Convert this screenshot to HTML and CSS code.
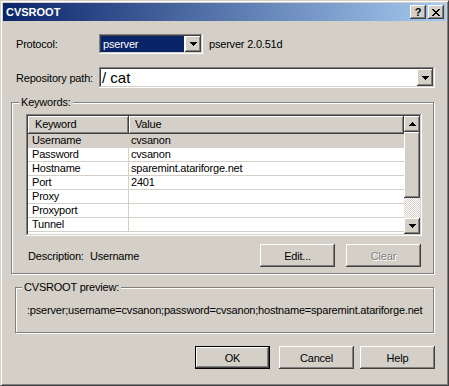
FILE: index.html
```html
<!DOCTYPE html>
<html lang="en">
<head>
    <meta charset="UTF-8">
    <title>CVSROOT</title>
    <link rel="stylesheet" href="styles.css">
</head>
<body>
    <div class="window">
        <!-- Barre de titre -->
        <div class="titlebar">
            <span class="title">CVSROOT</span>
            <button class="tbtn">?</button>
            <button class="tbtn">
                <svg width="8" height="7" viewBox="0 0 8 7"><path d="M0 0h2v1H0zM6 0h2v1H6zM1 1h2v1H1zM5 1h2v1H5zM2 2h4v1H2zM3 3h2v1H3zM2 4h4v1H2zM1 5h2v1H1zM5 5h2v1H5zM0 6h2v1H0zM6 6h2v1H6z"/></svg>
            </button>
        </div>

        <div class="content">
            <div class="field-row protocol-row">
                <label class="field-label">Protocol:</label>
                <div class="combo combo-small">
                    <span class="combo-text selected">pserver</span>
                    <span class="drop-btn"><svg width="7" height="4" viewBox="0 0 7 4"><path d="M0 0h7v1H0zM1 1h5v1H1zM2 2h3v1H2zM3 3h1v1H3z"/></svg></span>
                </div>
                <span class="version">pserver 2.0.51d</span>
            </div>

            <div class="field-row repo-row">
                <label class="field-label">Repository path:</label>
                <div class="combo combo-wide">
                    <span class="combo-text big">/ cat</span>
                    <span class="drop-btn"><svg width="7" height="4" viewBox="0 0 7 4"><path d="M0 0h7v1H0zM1 1h5v1H1zM2 2h3v1H2zM3 3h1v1H3z"/></svg></span>
                </div>
            </div>

            <!-- Mots-clés -->
            <div class="group keywords">
                <span class="group-label">Keywords:</span>
                <div class="listview">
                    <div class="lv-main">
                        <div class="lv-header">
                            <div class="hcell hcell-key">Keyword</div>
                            <div class="hcell hcell-val">Value</div>
                        </div>
                        <div class="lv-row selected"><div class="lv-key">Username</div><div class="lv-val">cvsanon</div></div>
                        <div class="lv-row"><div class="lv-key">Password</div><div class="lv-val">cvsanon</div></div>
                        <div class="lv-row"><div class="lv-key">Hostname</div><div class="lv-val">sparemint.atariforge.net</div></div>
                        <div class="lv-row"><div class="lv-key">Port</div><div class="lv-val">2401</div></div>
                        <div class="lv-row"><div class="lv-key">Proxy</div><div class="lv-val"></div></div>
                        <div class="lv-row"><div class="lv-key">Proxyport</div><div class="lv-val"></div></div>
                        <div class="lv-row"><div class="lv-key">Tunnel</div><div class="lv-val"></div></div>
                    </div>
                    <div class="scrollbar">
                        <div class="sb-btn"><svg width="7" height="4" viewBox="0 0 7 4"><path d="M3 0h1v1H3zM2 1h3v1H2zM1 2h5v1H1zM0 3h7v1H0z"/></svg></div>
                        <div class="sb-thumb"></div>
                        <div class="sb-track"></div>
                        <div class="sb-btn"><svg width="7" height="4" viewBox="0 0 7 4"><path d="M0 0h7v1H0zM1 1h5v1H1zM2 2h3v1H2zM3 3h1v1H3z"/></svg></div>
                    </div>
                </div>
                <div class="desc-row">
                    <span class="desc-label">Description:</span>
                    <span class="desc-value">Username</span>
                    <button class="btn">Edit...</button>
                    <button class="btn" disabled>Clear</button>
                </div>
            </div>

            <!-- Aperçu -->
            <div class="group preview">
                <span class="group-label">CVSROOT preview:</span>
                <div class="preview-text">:pserver;username=cvsanon;password=cvsanon;hostname=sparemint.atariforge.net</div>
            </div>

            <div class="dialog-buttons">
                <button class="btn default">OK</button>
                <button class="btn">Cancel</button>
                <button class="btn">Help</button>
            </div>
        </div>
    </div>
</body>
</html>
```

FILE: styles.css
```css
body {
    margin: 0;
    background: #d4d0c8;
    font-family: "Liberation Sans", Arial, sans-serif;
    font-size: 11px;
    letter-spacing: -0.2px;
    color: #000;
}
button {
    font: inherit;
    letter-spacing: inherit;
    color: #000;
    border: 0;
    padding: 0;
    margin: 0;
    background: #d4d0c8;
}
.window {
    box-sizing: border-box;
    width: 449px;
    height: 386px;
    background: #d4d0c8;
    border: 1px solid;
    border-color: #d4d0c8 #404040 #404040 #d4d0c8;
    box-shadow: inset 1px 1px #fff, inset -1px -1px #808080;
    padding: 2px;
}

/* Barre de titre */
.titlebar {
    height: 18px;
    display: flex;
    align-items: center;
    padding: 0 2px 0 3px;
    background: linear-gradient(to right, #0a246a, #a6caf0);
}
.title {
    flex: 1;
    color: #fff;
    font-weight: bold;
    letter-spacing: 0;
}
.tbtn {
    width: 16px;
    height: 14px;
    margin-left: 2px;
    font-weight: bold;
    line-height: 14px;
    display: flex;
    align-items: center;
    justify-content: center;
    box-shadow: inset -1px -1px #404040, inset 1px 1px #fff, inset -2px -2px #808080;
}

/* Bordures 3D */
.btn, .drop-btn, .sb-btn, .sb-thumb, .hcell {
    box-shadow: inset -1px -1px #404040, inset 1px 1px #fff, inset -2px -2px #808080, inset 2px 2px #d4d0c8;
}
.combo, .listview {
    box-shadow: inset -1px -1px #fff, inset 1px 1px #808080, inset -2px -2px #d4d0c8, inset 2px 2px #404040;
}

.field-row {
    display: flex;
    align-items: center;
    margin-left: 13px;
}
.protocol-row {
    margin-top: 13px;
    height: 20px;
}
.repo-row {
    margin-top: 13px;
    height: 21px;
}
.field-label {
    width: 83px;
}
.combo {
    box-sizing: border-box;
    height: 100%;
    display: flex;
    padding: 2px;
    background: #fff;
}
.combo-small {
    width: 104px;
}
.combo-wide {
    width: 336px;
}
.combo-text {
    flex: 1;
    display: flex;
    align-items: center;
}
.combo-text.selected {
    background: #0a246a;
    color: #fff;
    padding-left: 2px;
    margin-right: 1px;
}
.combo-text.big {
    font-size: 15px;
    letter-spacing: 0;
    padding-left: 1px;
}
.drop-btn {
    width: 16px;
    display: flex;
    align-items: center;
    justify-content: center;
    background: #d4d0c8;
}
.version {
    margin-left: 6px;
}

/* Cadres */
.group {
    box-sizing: border-box;
    border: 1px solid #808080;
    box-shadow: inset 1px 1px #fff, 1px 1px #fff;
}
.group-label {
    display: table;
    line-height: 13px;
    padding: 0 2px;
    margin: -7px 0 0 7px;
    background: #d4d0c8;
}
.keywords {
    width: 423px;
    height: 172px;
    margin: 14px 0 0 8px;
}
.preview {
    width: 419px;
    height: 46px;
    margin: 13px 0 0 12px;
}
.preview .group-label {
    margin-left: 6px;
}
.preview-text {
    line-height: 13px;
    margin: 10px 0 0 11px;
}

/* Liste */
.listview {
    box-sizing: border-box;
    display: flex;
    width: 396px;
    height: 122px;
    margin: 5px 0 0 14px;
    padding: 2px;
    background: #fff;
}
.lv-main {
    flex: 1;
}
.lv-header {
    display: flex;
    height: 18px;
}
.hcell {
    box-sizing: border-box;
    background: #d4d0c8;
    line-height: 17px;
}
.hcell-key {
    width: 101px;
    padding-left: 7px;
}
.hcell-val {
    flex: 1;
    padding-left: 6px;
}
.lv-row {
    display: flex;
    box-sizing: border-box;
    height: 14px;
    line-height: 13px;
    border-bottom: 1px solid #d4d0c8;
}
.lv-row.selected {
    background: #d4d0c8;
}
.lv-key {
    box-sizing: border-box;
    width: 101px;
    padding-left: 4px;
    border-right: 1px solid #d4d0c8;
}
.lv-val {
    flex: 1;
    padding-left: 2px;
}
.scrollbar {
    width: 16px;
    display: flex;
    flex-direction: column;
}
.sb-btn {
    height: 16px;
    display: flex;
    align-items: center;
    justify-content: center;
    background: #d4d0c8;
}
.sb-thumb {
    height: 66px;
    background: #d4d0c8;
}
.sb-track {
    height: 20px;
    background: repeating-conic-gradient(#fff 0 25%, #d4d0c8 0 50%) 0 0 / 2px 2px;
}

.desc-row {
    display: flex;
    align-items: center;
    width: 393px;
    height: 23px;
    margin: 8px 0 0 16px;
}
.desc-label {
    width: 62px;
}
.desc-value {
    flex: 1;
}
.btn {
    box-sizing: border-box;
    width: 75px;
    height: 23px;
}
.desc-row .btn + .btn {
    margin-left: 11px;
}
.btn:disabled {
    color: #808080;
    text-shadow: 1px 1px #fff;
}
.btn.default {
    border: 1px solid #000;
}

.dialog-buttons {
    display: flex;
    justify-content: flex-end;
    margin-top: 13px;
    padding-right: 11px;
}
.dialog-buttons .default {
    margin-right: 9px;
}
.dialog-buttons .btn:nth-child(2) {
    margin-right: 6px;
}
```
